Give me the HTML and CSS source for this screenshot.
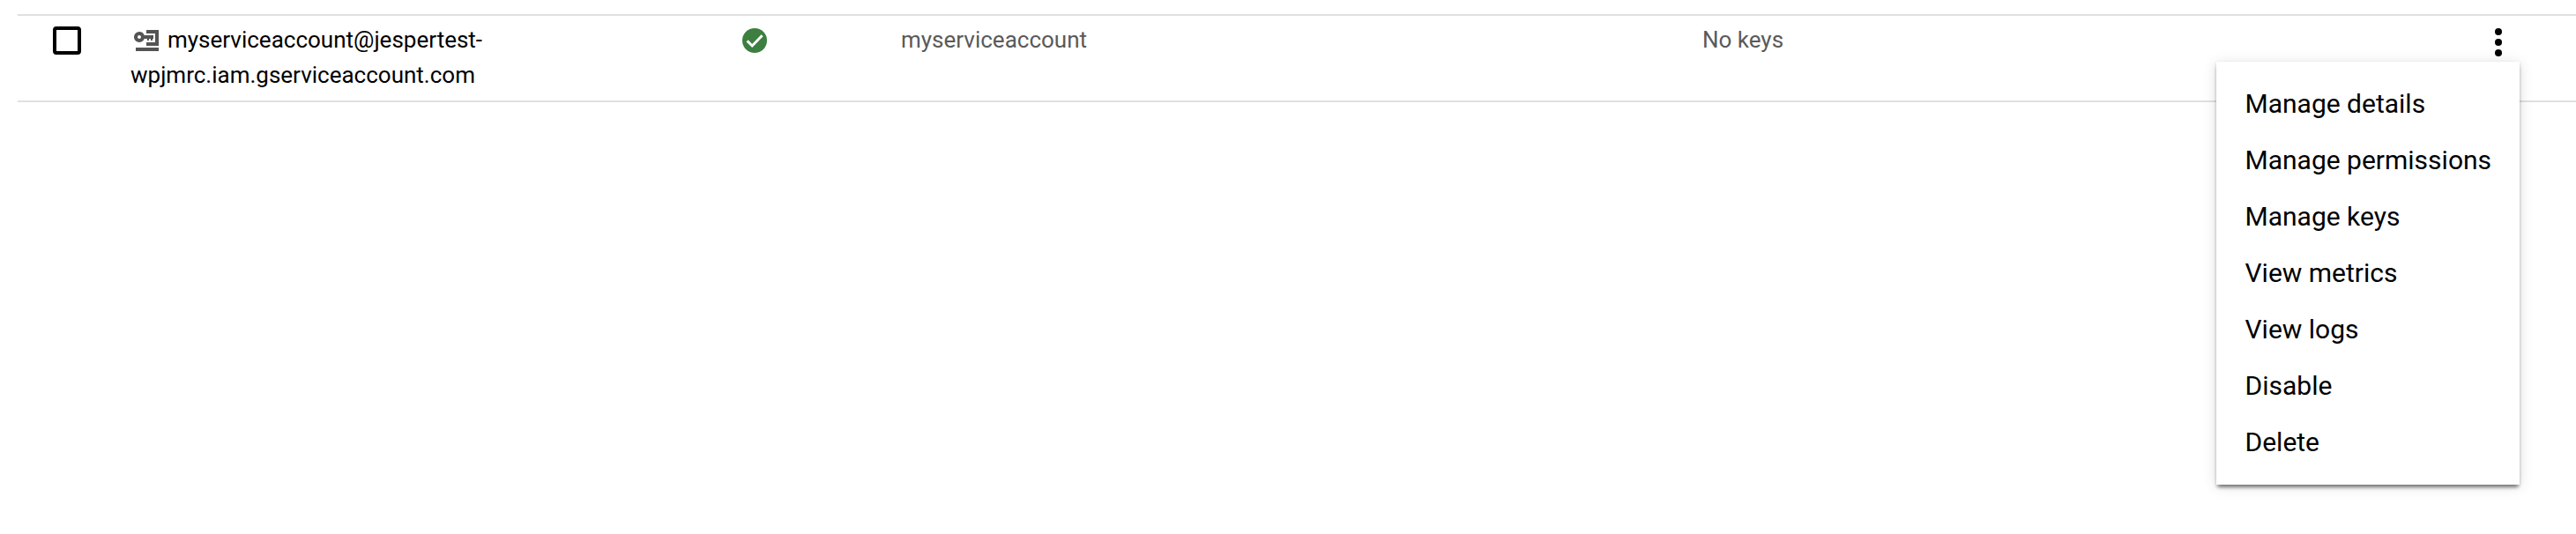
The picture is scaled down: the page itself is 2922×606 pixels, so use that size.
FILE: index.html
```html
<!DOCTYPE html>
<html lang="en">
<head>
<meta charset="utf-8">
<title>Service accounts</title>
<link rel="stylesheet" href="styles.css">
</head>
<body>
<div class="row">
  <div class="cell cell-select"><span class="checkbox" role="checkbox" aria-checked="false"></span></div>
  <div class="cell cell-email"><svg class="account-icon" viewBox="0 0 28 24"><path fill-rule="evenodd" d="M6 2a6 6 0 0 1 5.650 4H22v4h-1v2h-2v-2h-2v2h-2v-2h-3.350A6 6 0 1 1 6 2zm0 4a2 2 0 1 0 0 4 2 2 0 0 0 0-4z"/><path d="M14 0h14v18H14v-4h10V4H14zM2 20h26v4H2z"/></svg>myserviceaccount@jespertest-<br>wpjmrc.iam.gserviceaccount.com</div>
  <div class="cell cell-status"><svg class="status-icon" viewBox="0 0 28 28"><circle cx="14" cy="14" r="14"/><path d="M5.600 14.400 11.200 20 22.600 8.200"/></svg></div>
  <div class="cell cell-name">myserviceaccount</div>
  <div class="cell cell-keys">No keys</div>
  <div class="cell cell-actions">
    <svg class="more-icon" viewBox="0 0 8 32"><circle cx="4" cy="4" r="4"/><circle cx="4" cy="16" r="4"/><circle cx="4" cy="28" r="4"/></svg>
    <ul class="menu">
      <li>Manage details</li>
      <li>Manage permissions</li>
      <li>Manage keys</li>
      <li>View metrics</li>
      <li>View logs</li>
      <li>Disable</li>
      <li>Delete</li>
    </ul>
  </div>
</div>
</body>
</html>
```
FILE: styles.css
```css
* { box-sizing: border-box; }
body {
  margin: 0;
  padding: 16px 0 0 20px;
  height: 606px;
  background: #fff;
  color: #000;
  font-family: Roboto, sans-serif;
  font-size: 26px;
  line-height: 40px;
  overflow: hidden;
}
.row {
  display: grid;
  grid-template-columns: 128px 694px 180px 909px 877px 1fr;
  height: 100px;
  border-top: 2px solid #e0e0e0;
  border-bottom: 2px solid #e0e0e0;
}
.cell { padding-top: 7px; white-space: nowrap; }
.cell-select { padding: 12px 0 0 40px; }
.checkbox {
  display: block;
  width: 32px;
  height: 32px;
  border: 4px solid #000;
  border-radius: 4px;
}
.account-icon {
  width: 28px;
  height: 24px;
  margin: 0 10px 0 4px;
  vertical-align: -4px;
  fill: #545454;
}
.cell-status { padding-top: 14px; }
.status-icon { display: block; width: 28px; height: 28px; fill: #3c7f40; }
.status-icon path { fill: none; stroke: #fff; stroke-width: 2.9; }
.cell-name, .cell-keys { color: #5a5a5a; }
.cell-actions { position: relative; padding: 14px 0 0 22px; }
.more-icon { display: block; width: 8px; height: 32px; }
.menu {
  position: absolute;
  top: 52px;
  right: 64px;
  width: 344px;
  height: 480px;
  margin: 0;
  padding: 16px 32.5px;
  list-style: none;
  background: #fff;
  font-size: 30px;
  line-height: 64px;
  white-space: nowrap;
  box-shadow: 0 2px 4px rgba(0, 0, 0, .2), 0 5px 4px -2px rgba(0, 0, 0, .4), 0 2px 16px rgba(0, 0, 0, .12);
}
```
